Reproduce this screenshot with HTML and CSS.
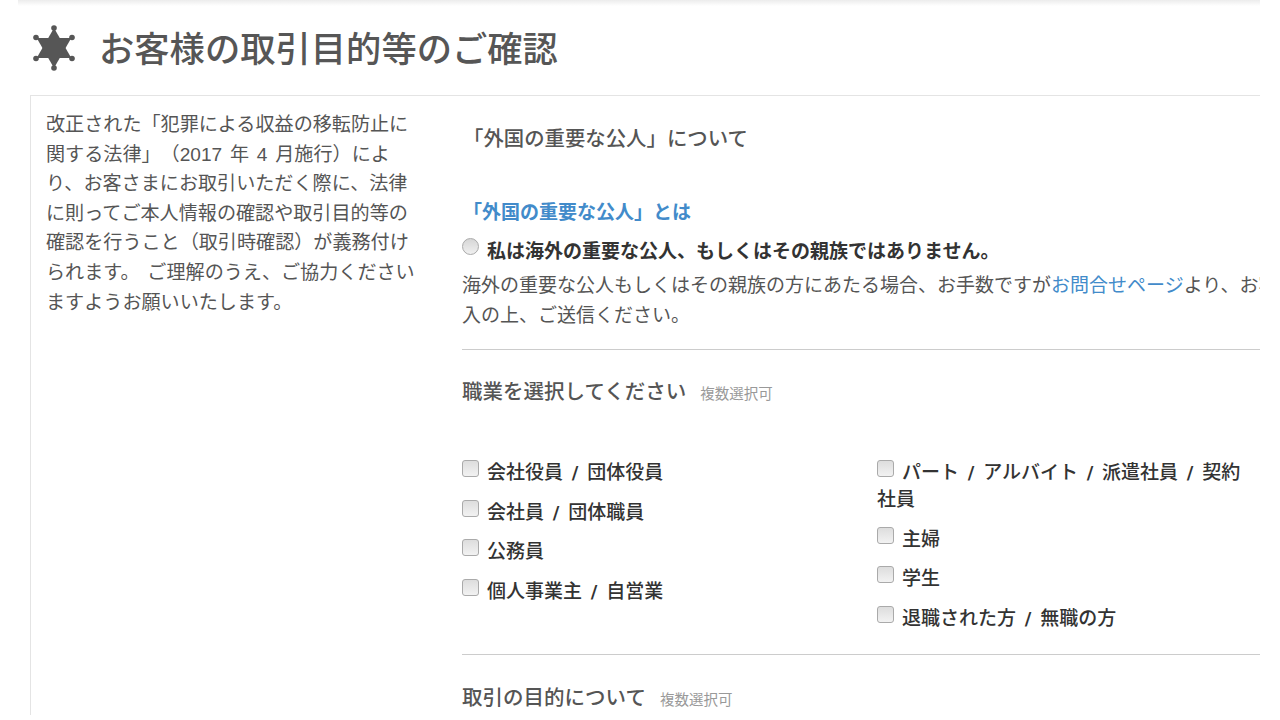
FILE: index.html
```html
<!DOCTYPE html>
<html lang="ja">
<head>
<meta charset="utf-8">
<title>お客様の取引目的等のご確認</title>
<link rel="stylesheet" href="styles.css">
</head>
<body>
<div class="stage">
  <div class="topband"></div>
  <h1 class="title">
    <svg class="star" viewBox="0 0 48 48" aria-hidden="true">
      <path d="M24 4 L41.300 34 L6.700 34 Z" />
      <path d="M24 44 L41.300 14 L6.700 14 Z" />
      <circle cx="24" cy="4" r="2.800"/><circle cx="24" cy="44" r="2.800"/>
      <circle cx="6" cy="13.500" r="2.800"/><circle cx="42" cy="13.500" r="2.800"/>
      <circle cx="6" cy="34.500" r="2.800"/><circle cx="42" cy="34.500" r="2.800"/>
    </svg>
    <span class="title-text">お客様の取引目的等のご確認</span>
  </h1>
  <div class="panel">
    <p class="intro">改正された「犯罪による収益の移転防止に関する法律」（2017 年 4 月施行）により、お客さまにお取引いただく際に、法律に則ってご本人情報の確認や取引目的等の確認を行うこと（取引時確認）が義務付けられます。 ご理解のうえ、ご協力くださいますようお願いいたします。</p>
    <div class="form">
      <section class="block pep">
        <h2 class="lead">「外国の重要な公人」について</h2>
        <a class="pep-link">「外国の重要な公人」とは</a>
        <label class="pep-check"><span class="radio"></span>私は海外の重要な公人、もしくはその親族ではありません。</label>
        <p class="note">海外の重要な公人もしくはその親族の方にあたる場合、お手数ですが<a class="inline-link">お問合せページ</a>より、お客様情報をご記入の上、ご送信ください。</p>
      </section>
      <section class="block jobs">
        <h2 class="heading">職業を選択してください<small>複数選択可</small></h2>
        <div class="options">
          <ul class="col">
            <li><span class="box"></span>会社役員<span class="sl"> / </span>団体役員</li>
            <li><span class="box"></span>会社員<span class="sl"> / </span>団体職員</li>
            <li><span class="box"></span>公務員</li>
            <li><span class="box"></span>個人事業主<span class="sl"> / </span>自営業</li>
          </ul>
          <ul class="col">
            <li><span class="box"></span>パート<span class="sl"> / </span>アルバイト<span class="sl"> / </span>派遣社員<span class="sl"> / </span>契約社員</li>
            <li><span class="box"></span>主婦</li>
            <li><span class="box"></span>学生</li>
            <li><span class="box"></span>退職された方<span class="sl"> / </span>無職の方</li>
          </ul>
        </div>
      </section>
      <section class="block purpose">
        <h2 class="heading">取引の目的について<small>複数選択可</small></h2>
      </section>
    </div>
  </div>
</div>
</body>
</html>
```
FILE: styles.css
```css
* { box-sizing: border-box; }
html, body { margin: 0; padding: 0; background: #fff; overflow: hidden; }
body {
  width: 1280px;
  height: 720px;
  font-family: "Liberation Sans", "Noto Sans CJK JP", sans-serif;
  color: #555;
  text-spacing-trim: space-all;
}
.stage {
  width: 1260px;
  height: 715px;
  overflow: hidden;
}
.topband {
  height: 6px;
  margin-left: 18px;
  background: linear-gradient(#ececec, #fff);
}
.title {
  display: flex;
  align-items: center;
  gap: 21px;
  height: 89px;
  margin: 0;
  padding: 0 0 0 30px;
  font-size: 35.300px;
  font-weight: 500;
  color: #565656;
}
.star { width: 48px; height: 48px; margin-bottom: 5px; fill: #565656; flex: none; }
.title-text { margin-bottom: 8px; }
.panel {
  display: flex;
  width: 1400px;
  height: 700px;
  margin-left: 30px;
  border: 1px solid #e4e4e4;
  border-width: 1px 0 0 1px;
}
.intro {
  width: 374px;
  flex: none;
  margin: 14px 0 0 15px;
  font-size: 19.100px;
  line-height: 29.600px;
  word-spacing: 2.500px;
  color: #555;
}
.form { width: 935px; margin-left: 42px; flex: none; }
.block { border-bottom: 1px solid #ccc; }
.purpose { border: 0; padding-top: 28px; }
.pep { height: 254px; padding-top: 28px; }
.lead { margin: 0 0 0 1px; font-size: 20.400px; line-height: 30px; font-weight: 500; color: #555; }
.pep-link { display: block; margin: 44px 0 0 1px; font-size: 19px; line-height: 30px; font-weight: 700; color: #428bca; }
.pep-check { display: flex; align-items: center; margin-top: 9px; font-size: 19px; line-height: 30px; font-weight: 700; color: #333; }
.radio {
  width: 17px; height: 17px; margin: 0 8px 12px 0; flex: none;
  border: 1px solid #aaa; border-radius: 50%;
  background: linear-gradient(#d6d6d6, #f0f0f0);
}
.note { margin: 4px 0 0; font-size: 19px; line-height: 30px; color: #555; }
.inline-link { color: #428bca; }
.heading { margin: 0; font-size: 20.500px; line-height: 30px; font-weight: 500; color: #555; }
.heading small { margin-left: 14px; font-size: 14.500px; font-weight: 400; color: #999; }
.jobs { height: 305px; padding-top: 27px; }
.options { display: flex; gap: 41px; margin-top: 50px; }
.col { list-style: none; margin: 0; padding: 0; flex: none; width: 374px; }
.col li { font-size: 19px; line-height: 27px; font-weight: 500; color: #333; margin-bottom: 12.700px; }
.sl { font-family: "DejaVu Sans", sans-serif; font-size: 18px; line-height: 1; font-weight: 700; word-spacing: 2.500px; }
.box {
  display: inline-block; width: 17px; height: 17px; margin: 0 8px 0 0; vertical-align: 2px;
  border: 1px solid #aaa; border-radius: 3px;
  background: linear-gradient(#ddd, #f2f2f2);
}
```
